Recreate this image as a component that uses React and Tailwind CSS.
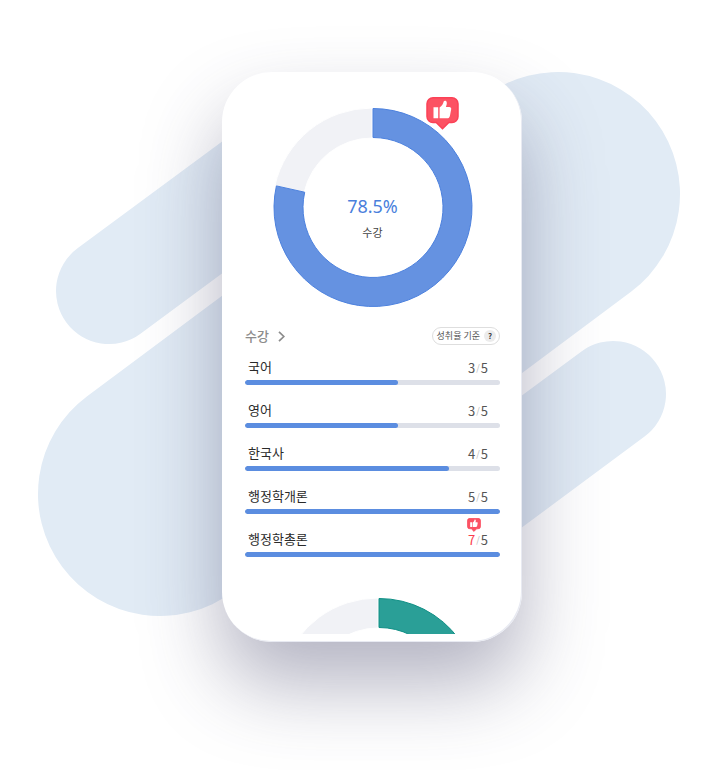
const subjects = [
  { name: "국어", done: 3, total: 5 },
  { name: "영어", done: 3, total: 5 },
  { name: "한국사", done: 4, total: 5 },
  { name: "행정학개론", done: 5, total: 5 },
  { name: "행정학총론", done: 7, total: 5 },
];

function Blobs() {
  return (
    <svg
      className="absolute top-0 left-1/2 h-[770px] w-[720px] max-w-none -translate-x-1/2"
      viewBox="0 0 720 770"
      fill="none"
      stroke="#e1ebf5"
      strokeLinecap="round"
      aria-hidden="true"
    >
      <path d="M109 291 300 150" strokeWidth="106" />
      <path d="M160 494 340 360" strokeWidth="244" />
      <path d="M558 194 400 312" strokeWidth="244" />
      <path d="M613 394 420 537" strokeWidth="106" />
    </svg>
  );
}

function LikeBadge({ className }) {
  return (
    <svg className={className} viewBox="0 0 33 33" aria-hidden="true">
      <path
        d="M7 .8h19a6 6 0 0 1 6 6V19.500a6 6 0 0 1-6 6h-3.200L16.500 31.800 10.200 25.500H7a6 6 0 0 1-6-6V6.800a6 6 0 0 1 6-6Z"
        fill="#fc5263"
        stroke="#fb4156"
        strokeWidth="1.500"
      />
      <path
        d="M7.500 10.300h4.700v10.900H7.500zM13.600 10.600c2.200-1.600 3.500-3.400 4.100-6 .3-1.200 2.600-1.300 3 .6.300 1.500-.2 3.100-.8 4.700h3.400c1.400 0 2.100 1 1.900 2.200l-1.200 6.300c-.4 2-1.300 2.800-3 2.800h-7.400z"
        fill="#fff"
      />
    </svg>
  );
}

function arc(cx, cy, R, r, from, to) {
  const point = (rad, share) => {
    const a = share * 2 * Math.PI;
    return `${(cx + rad * Math.sin(a)).toFixed(2)} ${(cy - rad * Math.cos(a)).toFixed(2)}`;
  };
  const large = to - from > 0.5 ? 1 : 0;
  return `M${point(R, from)}A${R} ${R} 0 ${large} 1 ${point(R, to)}L${point(r, to)}A${r} ${r} 0 ${large} 0 ${point(r, from)}Z`;
}

function Donut({ share, fill, stroke, className }) {
  return (
    <svg className={className} viewBox="0 0 200 200" aria-hidden="true">
      <path d={arc(99, 99.5, 99.5, 69.5, share, 1)} fill="#f1f2f6" stroke="#fff" />
      <path d={arc(100, 99.5, 99, 70, 0, share)} fill={fill} stroke={stroke} />
    </svg>
  );
}

function SubjectRow({ name, done, total }) {
  const over = done > total;
  const width = `${Math.min(100, (done / total) * 100)}%`;
  return (
    <li className="flex flex-col gap-[3px]">
      <div className="flex h-5 items-center justify-between pr-3 pl-[3px]">
        <span className="text-[13px] leading-5 text-[#2a2a2a]">{name}</span>
        <span className="relative flex items-center gap-px pt-[2px] text-[13px] leading-5 text-[#555]">
          {over && <LikeBadge className="absolute -top-[10px] -left-px size-[14px]" />}
          <span className={over ? "text-[#fb3d4c]" : ""}>{done}</span>
          <span className="text-[9px] text-[#b8b8b8]">/</span>
          <span>{total}</span>
        </span>
      </div>
      <div
        className="h-[5px] overflow-hidden rounded-full bg-[#dde0e8]"
        role="progressbar"
        aria-label={name}
        aria-valuenow={done}
        aria-valuemax={total}
      >
        <div className="h-full rounded-full bg-[#5b8de0]" style={{ width }} />
      </div>
    </li>
  );
}

export default function App() {
  return (
    <main className="relative min-h-screen overflow-hidden bg-white pt-[72px] pb-32 pl-6 font-['Noto_Sans_CJK_KR','Noto_Sans',sans-serif]">
      <Blobs />
      <section className="relative mx-auto w-full max-w-[300px] rounded-[50px] bg-white pt-9 pr-[22px] pb-2 pl-[23px] shadow-[inset_-1px_-1px_0_#e8eaf2,0_42px_80px_rgba(60,58,98,0.39)]">
        <div className="relative mx-auto grid w-[200px] place-items-center">
          <Donut
            share={0.785}
            fill="#6592e1"
            stroke="#4c81de"
            className="col-start-1 row-start-1 size-[200px]"
          />
          <div className="col-start-1 row-start-1 flex flex-col items-center gap-1.5 pt-[18px]">
            <strong className="font-['Noto_Sans',sans-serif] text-[18px] leading-6 font-normal text-[#4a7fdc]">
              78.5%
            </strong>
            <span className="text-[11px] leading-4 text-[#444]">수강</span>
          </div>
          <LikeBadge className="absolute -top-[11px] left-[153px] size-[33px]" />
        </div>

        <header className="mt-[19px] flex h-[18px] items-center justify-between">
          <a href="#courses" className="flex items-center gap-[9px] text-[13px] leading-[18px] font-medium text-[#8c8c8c]">
            수강
            <svg className="h-[11px] w-[7px]" viewBox="0 0 7 11" fill="none" stroke="#8c8c8c" strokeWidth="1.700" aria-hidden="true">
              <path d="m1 .8 4.800 4.700L1 10.200" />
            </svg>
          </a>
          <button
            type="button"
            className="flex h-[18px] items-center gap-1 rounded-full border border-[#dedede] bg-white pr-[3px] pl-1 text-[9px] leading-4 text-[#555]"
          >
            성취율 기준
            <span className="flex size-3 items-center justify-center rounded-full bg-[#ececec] text-[8px] leading-3 font-semibold text-[#444]">
              ?
            </span>
          </button>
        </header>

        <ul className="mt-3 flex flex-col gap-[15px]">
          {subjects.map((s) => (
            <SubjectRow key={s.name} {...s} />
          ))}
        </ul>

        <div className="mt-[41px] flex h-9 justify-center overflow-hidden pl-3">
          <Donut share={0.6} fill="#2a9f97" stroke="#0f8f85" className="size-[200px] shrink-0" />
        </div>
      </section>
    </main>
  );
}
